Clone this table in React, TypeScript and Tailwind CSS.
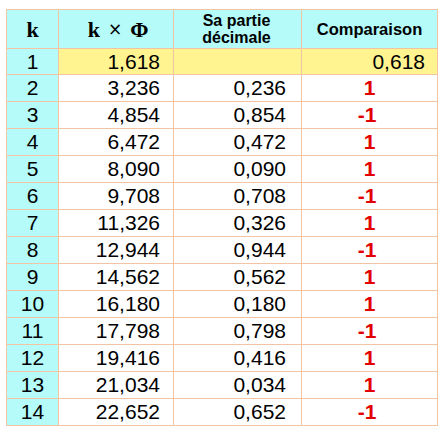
import React from "react";

const rows: [number, string, string, string][] = [
  [1, "1,618", "", "0,618"],
  [2, "3,236", "0,236", "1"],
  [3, "4,854", "0,854", "-1"],
  [4, "6,472", "0,472", "1"],
  [5, "8,090", "0,090", "1"],
  [6, "9,708", "0,708", "-1"],
  [7, "11,326", "0,326", "1"],
  [8, "12,944", "0,944", "-1"],
  [9, "14,562", "0,562", "1"],
  [10, "16,180", "0,180", "1"],
  [11, "17,798", "0,798", "-1"],
  [12, "19,416", "0,416", "1"],
  [13, "21,034", "0,034", "1"],
  [14, "22,652", "0,652", "-1"],
];

const cell = "border-r border-b border-[#f2c4a4] flex items-center";

export default function App() {
  return (
    <div className="w-[444px] h-[433px] bg-white pt-[9px] pl-[6px] font-['Liberation_Sans',Arial,sans-serif] text-black">
      <div className="grid grid-cols-[52px_115px_128px_136px] w-[432px] border-l border-t border-[#f2c4a4]">
        <div className={`${cell} h-[39px] bg-[#b4fbfa] justify-center font-['Liberation_Serif',serif] font-bold text-[22px]`}>k</div>
        <div className={`${cell} h-[39px] bg-[#b4fbfa] justify-center font-['Liberation_Serif',serif] font-bold text-[22px] pl-[4px]`}>
          <span>k</span>
          <span className="mx-[8px] font-['DejaVu_Sans',sans-serif] font-normal text-[17px] leading-none">×</span>
          <span>Φ</span>
        </div>
        <div className={`${cell} h-[39px] bg-[#b4fbfa] justify-center text-center font-bold text-[16px] leading-[17px] pr-[2px]`}>
          Sa partie<br />décimale
        </div>
        <div className={`${cell} h-[39px] bg-[#b4fbfa] justify-center font-bold text-[16.5px]`}>Comparaison</div>
        {rows.map(([k, v, d, c]) => {
          const first = k === 1;
          const h = first ? "h-[26px]" : "h-[27px]";
          return (
            <React.Fragment key={k}>
              <div className={`${cell} ${h} bg-[#b4fbfa] justify-center text-[21px]`}>{k}</div>
              <div className={`${cell} ${h} ${first ? "bg-[#fff490]" : "bg-white"} justify-end pr-[13px] text-[21px]`}>{v}</div>
              <div className={`${cell} ${h} ${first ? "bg-[#fff490]" : "bg-white"} justify-end pr-[15px] text-[21px]`}>{d}</div>
              {first ? (
                <div className={`${cell} ${h} bg-[#fff490] justify-end pr-[12px] text-[21px]`}>{c}</div>
              ) : (
                <div className={`${cell} ${h} bg-white justify-center text-[21px] font-bold text-[#e30000] ${c === "-1" ? "pr-[5px]" : ""}`}>{c}</div>
              )}
            </React.Fragment>
          );
        })}
      </div>
    </div>
  );
}
